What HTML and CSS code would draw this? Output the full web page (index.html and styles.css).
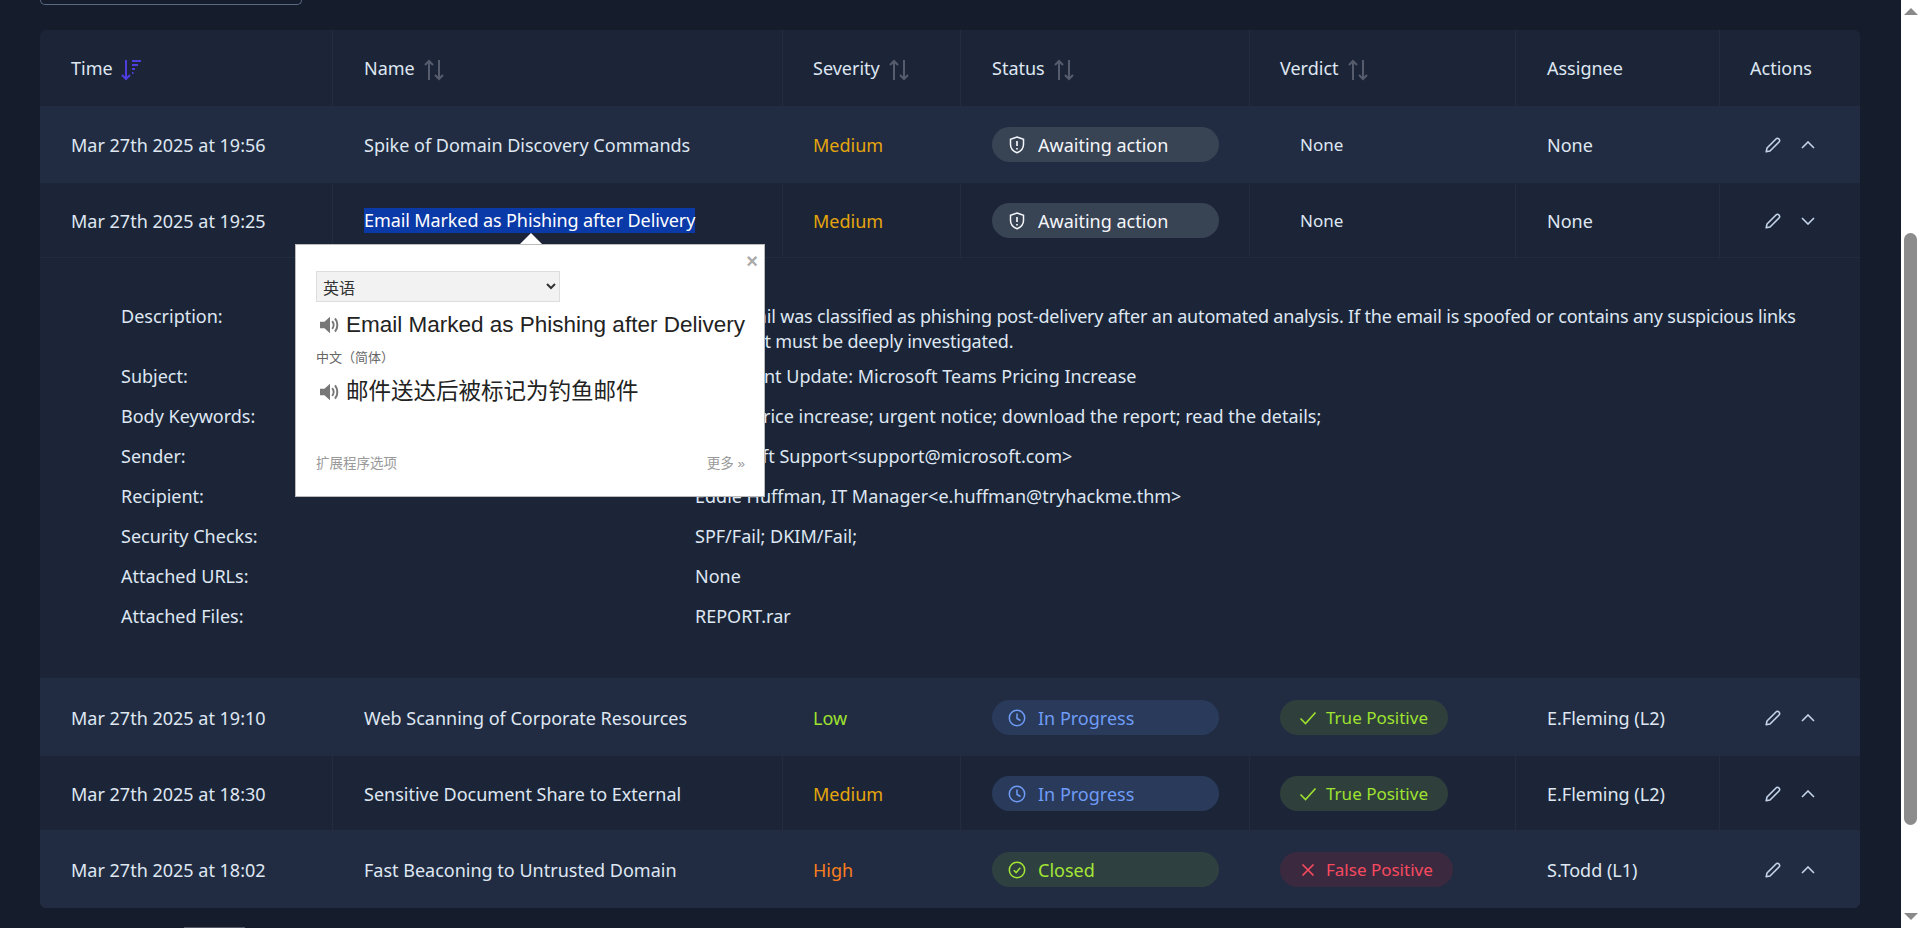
FILE: index.html
```html
<!DOCTYPE html>
<html lang="en">
<head>
    <meta charset="UTF-8">
    <title>Alerts</title>
    <link rel="stylesheet" href="styles.css">
</head>
<body>
<svg class="defs" width="0" height="0">
    <symbol id="i-sort" viewBox="0 0 20 22">
        <path d="M5 21V2M1 6l4-4 4 4M15 1v19M11 16l4 4 4-4" fill="none" stroke="currentColor" stroke-width="2"/>
    </symbol>
    <symbol id="i-shield" viewBox="-1 0 18 18">
        <path d="M8 1l6.500 2.300v5.200c0 4-2.800 6.800-6.500 8.300-3.700-1.500-6.500-4.300-6.500-8.300V3.300z" fill="none" stroke="currentColor" stroke-width="1.500"/>
        <path d="M8 5v5M8 12v1.500" fill="none" stroke="currentColor" stroke-width="1.700"/>
    </symbol>
    <symbol id="i-clock" viewBox="0 0 18 18">
        <circle cx="9" cy="9" r="7.700" fill="none" stroke="currentColor" stroke-width="1.500"/>
        <path d="M9 4.500V9.500l3.500 2" fill="none" stroke="currentColor" stroke-width="1.500"/>
    </symbol>
    <symbol id="i-closed" viewBox="0 0 18 18">
        <circle cx="9" cy="9" r="7.700" fill="none" stroke="currentColor" stroke-width="1.500"/>
        <path d="M5.800 9.300l2.300 2.300 4.200-4.800" fill="none" stroke="currentColor" stroke-width="1.500"/>
    </symbol>
    <symbol id="i-check" viewBox="0 0 18 14">
        <path d="M1.500 7.500l5 5L16.500 1.500" fill="none" stroke="currentColor" stroke-width="1.600"/>
    </symbol>
    <symbol id="i-x" viewBox="-2 0 18 14">
        <path d="M1.500 1.500l11 11M12.500 1.500l-11 11" fill="none" stroke="currentColor" stroke-width="1.700"/>
    </symbol>
    <symbol id="i-pen" viewBox="0 0 16 16">
        <path d="M1.200 14.800l.8-3.800L11 2c.9-.9 2-.9 2.800-.1l.3.300c.8.800.8 1.900-.1 2.800L5 14z" fill="none" stroke="currentColor" stroke-width="1.600" stroke-linejoin="round"/>
    </symbol>
    <symbol id="i-up" viewBox="0 0 14 8">
        <path d="M1 7l6-6 6 6" fill="none" stroke="currentColor" stroke-width="1.600"/>
    </symbol>
    <symbol id="i-down" viewBox="0 0 14 8">
        <path d="M1 1l6 6 6-6" fill="none" stroke="currentColor" stroke-width="1.600"/>
    </symbol>
    <symbol id="i-speaker" viewBox="0 0 18 18">
        <path d="M0 6h4l5-4.500v15L4 12H0z" fill="#777"/>
        <path d="M11 5.500c1.600 2 1.600 5 0 7M13.500 3c2.800 3.400 2.800 8.600 0 12" fill="none" stroke="#777" stroke-width="1.800"/>
    </symbol>
</svg>

<div class="page">
    <div class="main">
        <div class="toolbar"></div>

        <table class="alerts">
            <colgroup>
                <col class="c-time"><col class="c-name"><col class="c-sev"><col class="c-status"><col class="c-verdict"><col class="c-user"><col class="c-act">
            </colgroup>
            <thead>
            <tr>
                <th>Time
                    <svg class="sort-on" width="20" height="22" viewBox="0 0 20 22">
                        <path d="M5 1v19M1 16l4 4 4-4" fill="none" stroke="currentColor" stroke-width="2"/>
                        <path d="M11 2h9M11 6h6M11 10h3M11 14h1.500" fill="none" stroke="currentColor" stroke-width="2"/>
                    </svg>
                </th>
                <th>Name <svg class="sort" width="20" height="22"><use href="#i-sort"/></svg></th>
                <th>Severity <svg class="sort" width="20" height="22"><use href="#i-sort"/></svg></th>
                <th>Status <svg class="sort" width="20" height="22"><use href="#i-sort"/></svg></th>
                <th>Verdict <svg class="sort" width="20" height="22"><use href="#i-sort"/></svg></th>
                <th>Assignee</th>
                <th>Actions</th>
            </tr>
            </thead>
            <tbody>
            <tr class="light">
                <td>Mar 27th 2025 at 19:56</td>
                <td>Spike of Domain Discovery Commands</td>
                <td class="medium">Medium</td>
                <td><span class="pill st-wait"><svg width="18" height="18"><use href="#i-shield"/></svg>Awaiting action</span></td>
                <td><span class="no-verdict">None</span></td>
                <td>None</td>
                <td><div class="acts"><svg width="16" height="16"><use href="#i-pen"/></svg><svg width="14" height="8"><use href="#i-up"/></svg></div></td>
            </tr>
            <tr>
                <td>Mar 27th 2025 at 19:25</td>
                <td><span class="picked">Email Marked as Phishing after Delivery</span></td>
                <td class="medium">Medium</td>
                <td><span class="pill st-wait"><svg width="18" height="18"><use href="#i-shield"/></svg>Awaiting action</span></td>
                <td><span class="no-verdict">None</span></td>
                <td>None</td>
                <td><div class="acts"><svg width="16" height="16"><use href="#i-pen"/></svg><svg width="14" height="8"><use href="#i-down"/></svg></div></td>
            </tr>
            <tr class="detail">
                <td colspan="7">
                    <dl class="facts">
                        <dt class="long">Description:</dt>
                        <dd class="long">The email was classified as phishing post-delivery after an automated analysis. If the email is spoofed or contains any suspicious links or files, it must be deeply investigated.</dd>
                        <dt>Subject:</dt>
                        <dd>Important Update: Microsoft Teams Pricing Increase</dd>
                        <dt>Body Keywords:</dt>
                        <dd>teams price increase; urgent notice; download the report; read the details;</dd>
                        <dt>Sender:</dt>
                        <dd>Microsoft Support&lt;support@microsoft.com&gt;</dd>
                        <dt>Recipient:</dt>
                        <dd>Eddie Huffman, IT Manager&lt;e.huffman@tryhackme.thm&gt;</dd>
                        <dt>Security Checks:</dt>
                        <dd>SPF/Fail; DKIM/Fail;</dd>
                        <dt>Attached URLs:</dt>
                        <dd>None</dd>
                        <dt>Attached Files:</dt>
                        <dd>REPORT.rar</dd>
                    </dl>
                </td>
            </tr>
            <tr class="light">
                <td>Mar 27th 2025 at 19:10</td>
                <td>Web Scanning of Corporate Resources</td>
                <td class="low">Low</td>
                <td><span class="pill st-prog"><svg width="18" height="18"><use href="#i-clock"/></svg>In Progress</span></td>
                <td><span class="tag v-true"><svg width="18" height="14"><use href="#i-check"/></svg>True Positive</span></td>
                <td>E.Fleming (L2)</td>
                <td><div class="acts"><svg width="16" height="16"><use href="#i-pen"/></svg><svg width="14" height="8"><use href="#i-up"/></svg></div></td>
            </tr>
            <tr>
                <td>Mar 27th 2025 at 18:30</td>
                <td>Sensitive Document Share to External</td>
                <td class="medium">Medium</td>
                <td><span class="pill st-prog"><svg width="18" height="18"><use href="#i-clock"/></svg>In Progress</span></td>
                <td><span class="tag v-true"><svg width="18" height="14"><use href="#i-check"/></svg>True Positive</span></td>
                <td>E.Fleming (L2)</td>
                <td><div class="acts"><svg width="16" height="16"><use href="#i-pen"/></svg><svg width="14" height="8"><use href="#i-up"/></svg></div></td>
            </tr>
            <tr class="light">
                <td>Mar 27th 2025 at 18:02</td>
                <td>Fast Beaconing to Untrusted Domain</td>
                <td class="high">High</td>
                <td><span class="pill st-closed"><svg width="18" height="18"><use href="#i-closed"/></svg>Closed</span></td>
                <td><span class="tag v-false"><svg width="18" height="14"><use href="#i-x"/></svg>False Positive</span></td>
                <td>S.Todd (L1)</td>
                <td><div class="acts"><svg width="16" height="16"><use href="#i-pen"/></svg><svg width="14" height="8"><use href="#i-up"/></svg></div></td>
            </tr>
            </tbody>
        </table>

        <div class="pager-edge"></div>
    </div>

    <div class="scrollbar">
        <span class="sb-up"></span>
        <span class="sb-thumb"></span>
        <span class="sb-down"></span>
    </div>
</div>

<div class="bubble">
    <span class="bubble-close">&times;</span>
    <select class="lang"><option>英语</option></select>
    <div class="src"><svg width="20" height="20"><use href="#i-speaker"/></svg>Email Marked as Phishing after Delivery</div>
    <div class="target-lang">中文（简体）</div>
    <div class="dst"><svg width="20" height="20"><use href="#i-speaker"/></svg>邮件送达后被标记为钓鱼邮件</div>
    <div class="bubble-foot"><span>扩展程序选项</span><span>更多 »</span></div>
</div>
</body>
</html>
```

FILE: styles.css
```css
html, body {
    margin: 0;
    padding: 0;
    height: 100%;
    overflow: hidden;
}

body {
    font: 18px/24px "Noto Sans", sans-serif;
    color: #dfe7f2;
    background: #151c2b;
}

.defs {
    position: absolute;
}

.page {
    display: flex;
    height: 928px;
}

.main {
    flex: 1;
    padding: 0 41px 0 40px;
}

.toolbar {
    width: 262px;
    height: 5px;
    box-sizing: border-box;
    border: 1px solid #5b6b85;
    border-top: 0;
    border-radius: 0 0 6px 6px;
    margin-bottom: 25px;
}

/* table */
.alerts {
    width: 1820px;
    table-layout: fixed;
    border-collapse: separate;
    border-spacing: 0;
    background: #1c2538;
    border-radius: 6px;
    overflow: hidden;
}

.c-time { width: 293px; }
.c-name { width: 450px; }
.c-sev { width: 178px; }
.c-status { width: 289px; }
.c-verdict { width: 266px; }
.c-user { width: 204px; }
.c-act { width: 140px; }

.alerts th, .alerts td {
    padding: 0 0 0 31px;
    text-align: left;
    font-weight: 400;
    border-right: 1px solid #232c40;
    white-space: nowrap;
}

.alerts th:nth-child(odd):not(:first-child),
.alerts td:nth-child(odd):not(:first-child) {
    padding-left: 30px;
}

.alerts th:last-child, .alerts td:last-child {
    border-right: 0;
}

.alerts th {
    height: 76px;
}

.alerts td {
    height: 75px;
}

.alerts tbody tr {
    box-shadow: inset 0 -1px 0 #222c3f;
}

.alerts .light td {
    height: 77px;
    background: #212c42;
    border-right-color: #212c42;
}

.sort {
    color: #565c6c;
    vertical-align: -6px;
    margin-left: 5px;
}

.sort-on {
    color: #4f3de0;
    vertical-align: -6px;
    margin-left: 4px;
}

.medium { color: #e5a50d; }
.low { color: #9fe22f; }
.high { color: #fa7d1e; }

.picked {
    display: inline-block;
    line-height: 25px;
    letter-spacing: -0.1px;
    background: #0a39a8;
    color: #fff;
}

/* status pills */
.pill {
    display: flex;
    align-items: center;
    gap: 12px;
    width: 227px;
    height: 35px;
    box-sizing: border-box;
    padding-left: 16px;
    border-radius: 18px;
}

.st-wait { background: #384354; color: #f4f6fa; }
.st-prog { background: #293a5a; color: #6f9cf6; }
.st-closed { background: #2f4040; color: #a3e635; }

.tag {
    display: inline-flex;
    align-items: center;
    gap: 9px;
    height: 35px;
    box-sizing: border-box;
    padding: 0 20px 0 19px;
    border-radius: 18px;
    font-size: 17px;
}

.v-true { background: #2e3f3c; color: #9fe22f; }
.v-false { background: #3b2a3f; color: #f8495f; }

.no-verdict {
    font-size: 17px;
    padding-left: 20px;
}

.acts {
    display: flex;
    align-items: center;
    gap: 20px;
    padding-left: 15px;
    color: #c3d3ea;
}

/* expanded row */
.alerts .detail td {
    height: 421px;
    padding: 0;
    vertical-align: top;
    white-space: normal;
}

.facts {
    display: grid;
    grid-template-columns: 574px 1118px;
    margin: 0;
    padding: 46px 0 0 81px;
    line-height: 30px;
}

.facts dt, .facts dd {
    margin: 0 0 10px;
}

.facts .long {
    line-height: 25px;
    margin-bottom: 7px;
}

.facts dd.long {
    letter-spacing: -0.18px;
}

/* bits of the page cut off by the window */
.pager-edge {
    width: 61px;
    height: 1px;
    margin: 19px 0 0 144px;
    background: #555a66;
}

.scrollbar {
    width: 19px;
    background: #fff;
    display: flex;
    flex-direction: column;
    align-items: center;
}

.sb-up {
    margin-top: 8px;
    border: 7px solid transparent;
    border-top: 0;
    border-bottom: 7px solid #8a8a8a;
}

.sb-thumb {
    width: 13px;
    height: 592px;
    margin-top: 218px;
    border-radius: 7px;
    background: #8c8c8c;
}

.sb-down {
    margin-top: auto;
    margin-bottom: 8px;
    border: 7px solid transparent;
    border-bottom: 0;
    border-top: 7px solid #8a8a8a;
}

/* translate bubble over the page */
.bubble {
    position: absolute;
    left: 295px;
    top: 244px;
    width: 470px;
    height: 253px;
    box-sizing: border-box;
    padding: 26px 19px 0 20px;
    background: #fff;
    border: 1px solid #bbb;
    color: #222;
    font-family: "Liberation Sans", "Noto Sans CJK SC", sans-serif;
}

.bubble::before {
    content: "";
    position: absolute;
    left: 224px;
    top: -12px;
    border: 11px solid transparent;
    border-top: 0;
    border-bottom: 11px solid #fff;
}

.bubble-close {
    position: absolute;
    right: 6px;
    top: 6px;
    font-size: 20px;
    font-weight: 700;
    line-height: 20px;
    color: #aaa;
}

.lang {
    display: block;
    width: 244px;
    height: 31px;
    padding: 0 2px;
    background: #f2f2f2;
    border: 1px solid #ddd;
    font: 16px "Noto Sans CJK SC", sans-serif;
    color: #333;
}

.src, .dst {
    display: flex;
    align-items: center;
    gap: 6px;
    padding-left: 4px;
    font-size: 22.5px;
    line-height: 30px;
    white-space: nowrap;
}

.src svg, .dst svg {
    flex: none;
}

.src {
    margin-top: 8px;
}

.target-lang {
    margin-top: 9px;
    font-size: 13px;
    line-height: 18px;
    color: #666;
}

.dst {
    margin-top: 10px;
}

.bubble-foot {
    display: flex;
    justify-content: space-between;
    margin-top: 48px;
    font-size: 13.5px;
    line-height: 18px;
    color: #999;
}
```
